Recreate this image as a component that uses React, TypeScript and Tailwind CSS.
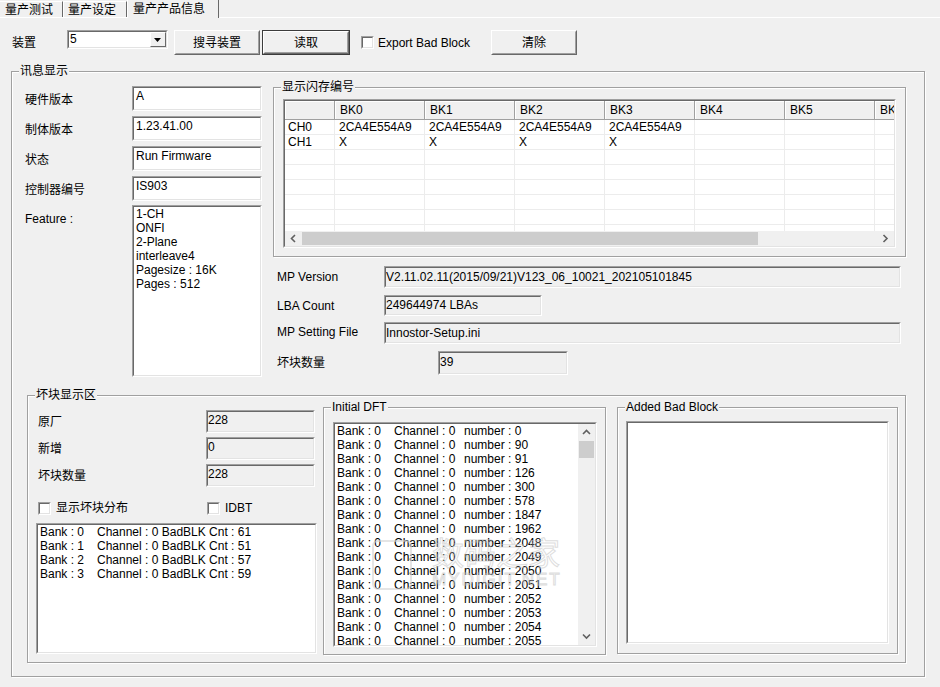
import React from 'react';

// Classic Win32 "量产产品信息" tab page

const FONT = "font-['Liberation_Sans','Noto_Sans_CJK_SC',sans-serif]";

function Sunken({ className = '', inner = '', children }: { className?: string; inner?: string; children?: React.ReactNode }) {
  return (
    <div className={`border border-t-[#a0a0a0] border-l-[#a0a0a0] border-b-white border-r-white ${className}`}>
      <div className={`h-full w-full overflow-hidden border border-t-[#696969] border-l-[#696969] border-b-[#e3e3e3] border-r-[#e3e3e3] ${inner}`}>
        {children}
      </div>
    </div>
  );
}

function Button({ label, className = '', isDefault = false }: { label: string; className?: string; isDefault?: boolean }) {
  const body = (
    <div className="h-full w-full border border-t-white border-l-white border-b-[#696969] border-r-[#696969]">
      <div className="flex h-full w-full items-center justify-center border border-t-[#f0f0f0] border-l-[#f0f0f0] border-b-[#a0a0a0] border-r-[#a0a0a0] bg-[#f0f0f0]">
        {label}
      </div>
    </div>
  );
  if (isDefault) {
    return <div className={`border border-[#3c3c3c] ${className}`}>{body}</div>;
  }
  return <div className={className}>{body}</div>;
}

function Group({ label, className = '', children }: { label: string; className?: string; children?: React.ReactNode }) {
  return (
    <div className={`relative border border-[#a0a0a0] shadow-[inset_1px_1px_0_#fff,1px_1px_0_#fff] ${className}`}>
      <span className="absolute -top-[9px] left-[7px] bg-[#f0f0f0] px-px leading-[16px]">{label}</span>
      {children}
    </div>
  );
}

function Check({ className = '' }: { className?: string }) {
  return <Sunken className={`h-[13px] w-[13px] shrink-0 ${className}`} inner="bg-white" />;
}

function Chevron({ dir }: { dir: 'up' | 'down' | 'left' | 'right' }) {
  const d = {
    up: 'M1 5 L4.5 1.5 L8 5',
    down: 'M1 1.5 L4.5 5 L8 1.5',
    left: 'M5 1 L1.5 4.5 L5 8',
    right: 'M1.5 1 L5 4.5 L1.5 8',
  }[dir];
  const vert = dir === 'up' || dir === 'down';
  return (
    <svg width={vert ? 9 : 7} height={vert ? 7 : 9} viewBox={vert ? '0 0 9 7' : '0 0 7 9'}>
      <path d={d} fill="none" stroke="#606060" strokeWidth="1.6" />
    </svg>
  );
}

const banks = ['BK0', 'BK1', 'BK2', 'BK3', 'BK4', 'BK5', 'BK6'];
const ch0 = ['2CA4E554A9', '2CA4E554A9', '2CA4E554A9', '2CA4E554A9', '', '', ''];
const ch1 = ['X', 'X', 'X', 'X', '', '', ''];

const dftNumbers = [0, 90, 91, 126, 300, 578, 1847, 1962, 2048, 2049, 2050, 2051, 2052, 2053, 2054, 2055];

const badCounts = [
  { bank: 0, cnt: 61 },
  { bank: 1, cnt: 51 },
  { bank: 2, cnt: 57 },
  { bank: 3, cnt: 59 },
];

const infoRows = [
  { label: '硬件版本', value: 'A' },
  { label: '制体版本', value: '1.23.41.00' },
  { label: '状态', value: 'Run Firmware' },
  { label: '控制器编号', value: 'IS903' },
];

const features = ['1-CH', 'ONFI', '2-Plane', 'interleave4', 'Pagesize : 16K', 'Pages : 512'];

function FlashGrid() {
  return (
    <Sunken className="ml-[9px] mt-[11px] h-[149px] w-[613px]" inner="flex flex-col bg-white">
      {/* header */}
      <div className="flex h-[19px] shrink-0 bg-[#f0f0f0]">
        <div className="h-full w-[50px] shrink-0 border-b border-r border-b-[#a0a0a0] border-r-[#a0a0a0] shadow-[inset_1px_1px_0_#fff]" />
        {banks.map((b) => (
          <div
            key={b}
            className="h-full w-[90px] shrink-0 border-b border-r border-b-[#a0a0a0] border-r-[#a0a0a0] pl-[5px] leading-[18px] shadow-[inset_1px_1px_0_#fff]"
          >
            {b}
          </div>
        ))}
      </div>
      {/* rows */}
      <div className="flex-1 overflow-hidden">
        {[0, 1, 2, 3, 4, 5, 6, 7].map((r) => (
          <div key={r} className="flex h-[15px]">
            <div className="h-full w-[50px] shrink-0 border-b border-r border-[#ececec] pl-[3px] leading-[15px]">
              {r === 0 ? 'CH0' : r === 1 ? 'CH1' : ''}
            </div>
            {banks.map((b, i) => (
              <div key={b} className="h-full w-[90px] shrink-0 border-b border-r border-[#ececec] pl-[4px] leading-[15px]">
                {r === 0 ? ch0[i] : r === 1 ? ch1[i] : ''}
              </div>
            ))}
          </div>
        ))}
      </div>
      {/* horizontal scrollbar */}
      <div className="flex h-[15px] shrink-0 items-center bg-[#f0f0f0]">
        <div className="flex h-full w-[17px] items-center justify-center">
          <Chevron dir="left" />
        </div>
        <div className="h-[13px] w-[456px] bg-[#cdcdcd]" />
        <div className="flex-1" />
        <div className="flex h-full w-[17px] items-center justify-center">
          <Chevron dir="right" />
        </div>
      </div>
    </Sunken>
  );
}

export default function App() {
  return (
    <div className={`relative h-[687px] w-[940px] overflow-hidden bg-[#f0f0f0] text-[12px] leading-[16px] text-black ${FONT}`}>
      {/* tabs */}
      <div className="flex h-[18px] items-end border-b border-b-white">
        <div className="flex h-[16px] w-[63px] items-center border-r border-t border-r-[#696969] border-t-white pl-[5px]">
          量产测试
        </div>
        <div className="flex h-[16px] w-[64px] items-center border-l border-r border-t border-l-white border-r-[#696969] border-t-white pl-[4px]">
          量产设定
        </div>
        <div className="-mb-px flex h-[19px] w-[92px] items-start border-l border-r border-t border-l-white border-r-[#696969] border-t-white bg-[#f0f0f0] pl-[5px] pt-px">
          量产产品信息
        </div>
      </div>

      {/* toolbar */}
      <div className="mt-[12px] flex h-[25px] items-center">
        <div className="ml-[12px] w-[55px]">装置</div>
        <Sunken className="h-[19px] w-[101px] self-start" inner="flex bg-white">
          <div className="flex-1 pl-[1px] leading-[15px]">5</div>
          <div className="h-full w-[16px] border border-t-white border-l-white border-b-[#696969] border-r-[#696969] bg-[#f0f0f0]">
            <svg width="14" height="13" viewBox="0 0 14 13">
              <path d="M3 5 L10 5 L6.5 9 Z" fill="#000" />
            </svg>
          </div>
        </Sunken>
        <Button label="搜寻装置" className="ml-[6px] h-[25px] w-[86px]" />
        <Button label="读取" className="ml-[2px] h-[25px] w-[88px]" isDefault />
        <Check className="ml-[11px]" />
        <div className="ml-[4px] w-[113px]">Export Bad Block</div>
        <Button label="清除" className="h-[25px] w-[86px]" />
      </div>

      {/* 讯息显示 */}
      <Group label="讯息显示" className="ml-[11px] mt-[16px] h-[606px] w-[914px]">
        <div className="flex items-start">
          {/* left info */}
          <div className="ml-[13px] mt-[14px] flex w-[237px] flex-col">
            {infoRows.map((r) => (
              <div key={r.label} className="mb-[5px] flex items-start">
                <div className="w-[107px] pt-[6px]">{r.label}</div>
                <Sunken className="h-[25px] w-[130px]" inner="bg-white pl-[2px]">
                  {r.value}
                </Sunken>
              </div>
            ))}
            <div className="-mt-px flex items-start">
              <div className="w-[107px] pt-[6px]">Feature :</div>
              <Sunken className="h-[172px] w-[130px]" inner="bg-white pl-[2px] leading-[14px]">
                {features.map((f) => (
                  <div key={f}>{f}</div>
                ))}
              </Sunken>
            </div>
          </div>

          {/* right info */}
          <div className="ml-[11px] mt-[15px] flex w-[633px] flex-col">
            <Group label="显示闪存编号" className="h-[170px] w-[633px]">
              <FlashGrid />
            </Group>

            <div className="mt-[9px] flex items-center">
              <div className="w-[111px] pl-[4px]">MP Version</div>
              <Sunken className="h-[22px] w-[517px]" inner="bg-[#f0f0f0] leading-[18px]">
                V2.11.02.11(2015/09/21)V123_06_10021_202105101845
              </Sunken>
            </div>
            <div className="mt-[7px] flex items-center">
              <div className="w-[111px] pl-[4px]">LBA Count</div>
              <Sunken className="h-[21px] w-[158px]" inner="bg-[#f0f0f0] leading-[17px]">
                249644974 LBAs
              </Sunken>
            </div>
            <div className="mt-[6px] flex items-center">
              <div className="w-[111px] pl-[4px] pb-[2px]">MP Setting File</div>
              <Sunken className="h-[22px] w-[517px]" inner="bg-[#f0f0f0] leading-[18px]">
                Innostor-Setup.ini
              </Sunken>
            </div>
            <div className="mt-[7px] flex items-center">
              <div className="w-[165px] pl-[4px]">坏块数量</div>
              <Sunken className="h-[24px] w-[130px]" inner="bg-[#f0f0f0] leading-[18px]">
                39
              </Sunken>
            </div>
          </div>
        </div>

        {/* 坏块显示区 */}
        <Group label="坏块显示区" className="ml-[15px] mt-[18px] h-[268px] w-[879px]">
          <div className="flex items-start">
            <div className="ml-[8px] mt-[14px] flex w-[281px] flex-col">
              {[
                { label: '原厂', value: '228' },
                { label: '新增', value: '0' },
                { label: '坏块数量', value: '228' },
              ].map((r) => (
                <div key={r.label} className="mb-[4px] flex items-center">
                  <div className="w-[170px] pl-[2px]">{r.label}</div>
                  <Sunken className="h-[23px] w-[109px]" inner="bg-[#f0f0f0] leading-[16px]">
                    {r.value}
                  </Sunken>
                </div>
              ))}
              <div className="mt-[9px] flex items-center">
                <div className="flex w-[171px] items-center">
                  <Check className="ml-[2px]" />
                  <span className="ml-[5px]">显示坏块分布</span>
                </div>
                <Check />
                <span className="ml-[5px]">IDBT</span>
              </div>
              <Sunken className="mt-[7px] h-[131px] w-[281px]" inner="bg-white pl-[2px] leading-[14px]">
                {badCounts.map((b) => (
                  <div key={b.bank} className="flex whitespace-pre">
                    <span className="w-[57px]">Bank : {b.bank}</span>
                    <span>Channel : 0 BadBLK Cnt : {b.cnt}</span>
                  </div>
                ))}
              </Sunken>
            </div>

            <Group label="Initial DFT" className="ml-[6px] mt-[11px] h-[248px] w-[283px]">
              <Sunken className="ml-[9px] mt-[14px] h-[225px] w-[264px]" inner="flex bg-white">
                <div className="flex-1 overflow-hidden pl-[2px] leading-[14px]">
                  {dftNumbers.map((n) => (
                    <div key={n} className="flex whitespace-pre">
                      <span className="w-[57px]">Bank : 0</span>
                      <span className="w-[70px]">Channel : 0</span>
                      <span>number : {n}</span>
                    </div>
                  ))}
                </div>
                <div className="flex h-full w-[17px] flex-col items-center bg-[#f0f0f0]">
                  <div className="flex h-[17px] w-full items-center justify-center">
                    <Chevron dir="up" />
                  </div>
                  <div className="h-[17px] w-[15px] bg-[#cdcdcd]" />
                  <div className="flex-1" />
                  <div className="flex h-[17px] w-full items-center justify-center">
                    <Chevron dir="down" />
                  </div>
                </div>
              </Sunken>
            </Group>

            <Group label="Added Bad Block" className="ml-[11px] mt-[11px] h-[247px] w-[281px]">
              <Sunken className="ml-[8px] mt-[13px] h-[223px] w-[263px]" inner="bg-white" />
            </Group>
          </div>
        </Group>
      </Group>

      {/* faint site watermark over the lists */}
      <div className="pointer-events-none absolute left-[372px] top-[536px] flex items-start opacity-60">
        <div className="mt-[4px] h-[50px] w-[40px] rounded-[6px] border-2 border-[#d4d4d4]" />
        <div className="ml-[20px] flex flex-col">
          <span className="text-[32px] leading-[36px] text-transparent [-webkit-text-stroke:1px_#c8c8c8]">数码之家</span>
          <span className="text-[17px] leading-[16px] tracking-[2px] text-transparent [-webkit-text-stroke:1px_#c8c8c8]">MYDIGIT.NET</span>
        </div>
      </div>
    </div>
  );
}
